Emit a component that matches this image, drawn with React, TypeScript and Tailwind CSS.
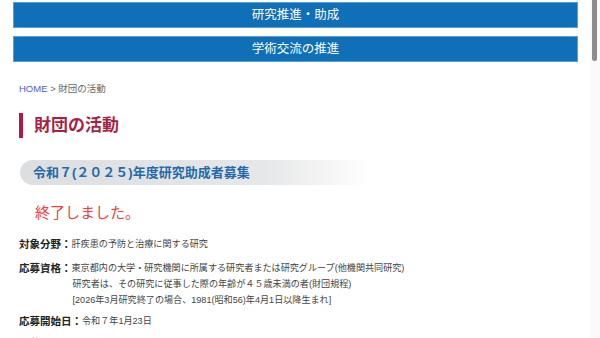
import React from 'react';

const navItems = ['研究推進・助成', '学術交流の推進'];

const Field: React.FC<{ label: string; children: React.ReactNode }> = ({ label, children }) => (
  <div className="flex items-start">
    <span className="text-[10.5px] font-bold text-[#222] leading-[16px] whitespace-nowrap">{label}：</span>
    <div className="text-[9.1px] text-[#444] leading-[16px]">{children}</div>
  </div>
);

const App: React.FC = () => {
  return (
    <div className="flex h-[338px] w-[600px] overflow-hidden bg-white font-['Liberation_Sans','Noto_Sans_CJK_JP',sans-serif]">
      <main className="flex-1 min-w-0">
        <nav className="flex flex-col gap-2 pl-[13px] pr-[12px] pt-[2px]">
          {navItems.map(item => (
            <a
              key={item}
              className="flex h-[26px] items-center justify-center border border-[#5b9ed6] bg-[#0f6fb7] text-[12.5px] text-white"
            >
              {item}
            </a>
          ))}
        </nav>

        <div className="px-[19px]">
          <p className="mt-[21px] text-[9.5px] leading-[12px] text-[#666]">
            <span className="text-[#4d5ad8]">HOME</span> &gt; 財団の活動
          </p>

          <h1 className="mt-[18px] flex h-[25px] items-center border-l-[4px] border-[#b0174a] pl-[11px] text-[17px] font-bold text-[#a81f45]">
            財団の活動
          </h1>

          <h2 className="mt-[22px] ml-[1px] flex h-[25px] w-[352px] items-center rounded-l-full bg-gradient-to-r from-[#dcdee0] via-[#e6e7e8] via-70% to-white pl-[13px] text-[13px] font-bold text-[#226aad]">
            令和７(２０２５)年度研究助成者募集
          </h2>

          <p className="mt-[19px] pl-[16px] text-[15px] leading-[18px] text-[#ee4040]">終了しました。</p>

          <div className="mt-[14px] flex flex-col">
            <Field label="対象分野">肝疾患の予防と治療に関する研究</Field>
            <div className="mt-[8px]">
              <Field label="応募資格">
                <p>東京都内の大学・研究機関に所属する研究者または研究グループ(他機関共同研究)</p>
                <p className="pl-[1px]">研究者は、その研究に従事した際の年齢が４５歳未満の者(財団規程)</p>
                <p className="pl-[1px]">[2026年3月研究終了の場合、1981(昭和56)年4月1日以降生まれ]</p>
              </Field>
            </div>
            <div className="mt-[5px]">
              <Field label="応募開始日">令和７年1月23日</Field>
            </div>
            <div className="mt-[6px]">
              <Field label="応募締切日">令和７年3月14日</Field>
            </div>
          </div>
        </div>
      </main>

      <aside className="w-[10px] shrink-0 bg-[#fafafa] pl-[2px] pr-[3px]">
        <div className="h-[61px] w-full rounded-b-full bg-[#8c8c8c]" />
      </aside>
    </div>
  );
};

export default App;
